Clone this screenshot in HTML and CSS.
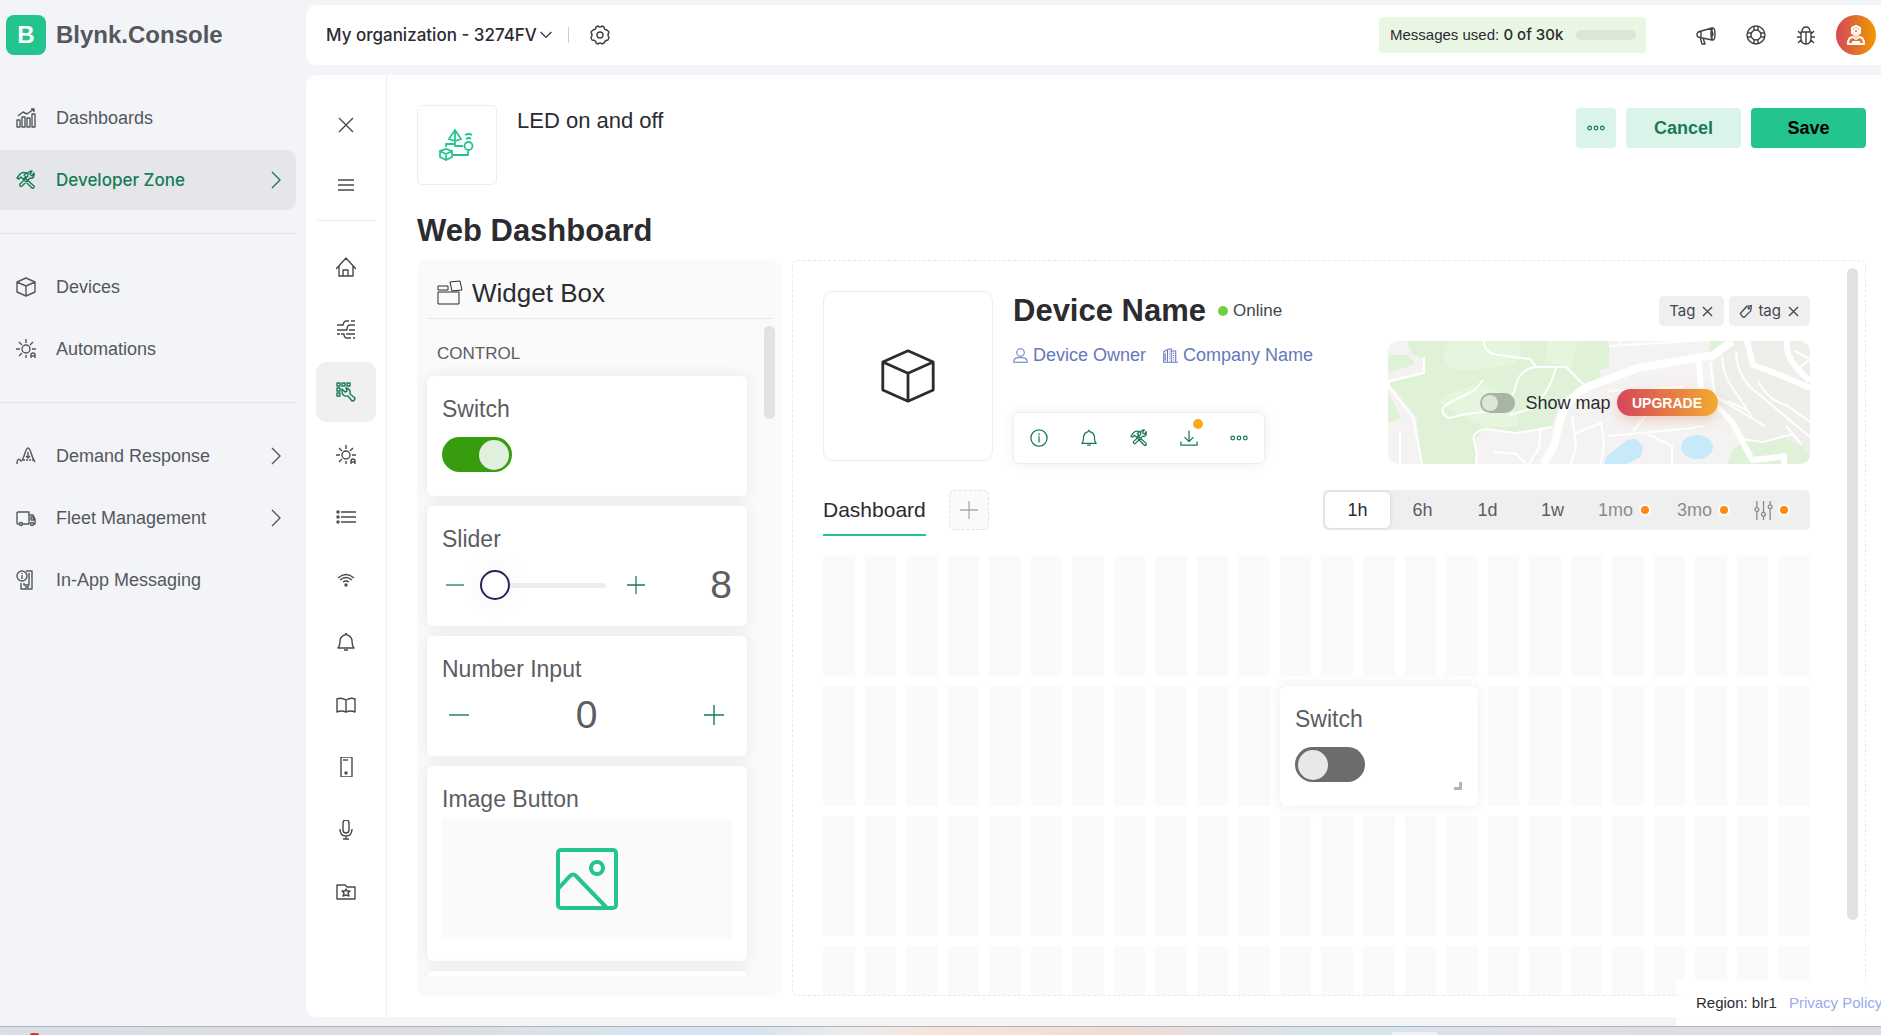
FILE: index.html
```html
<!DOCTYPE html>
<html lang="en">
<head>
<meta charset="utf-8">
<title>Blynk.Console</title>
<link rel="stylesheet" href="styles.css">
</head>
<body>
<svg class="sprite" aria-hidden="true">
  <symbol id="i-chart" viewBox="0 0 20 20"><path d="M1 12h3v7H1zM6 9h3v10H6zM11 10h3v9h-3zM16 6h3v13h-3zM2 8l5-4 4 2 7-5M15 1h3v3"/></symbol>
  <symbol id="i-tools" viewBox="0 0 20 20"><path d="M1 8l3-4c2-2 4-2 7-1L8 5l2 2-3 2-2-2-2 2zM9 8l9 8c1 1-1 3-2 2L8 10M18 3l-2 3-2-2 2-3c-3 0-5 2-4 5l-8 8c-1 2 1 3 2 2l8-8c3 1 5-2 4-5z"/></symbol>
  <symbol id="i-cube" viewBox="0 0 20 20"><path d="M10 1l9 4v10l-9 4-9-4V5zM1 5l9 4 9-4M10 9v10"/></symbol>
  <symbol id="i-auto" viewBox="0 0 20 20"><circle cx="10" cy="10" r="4"/><path d="M10 0v4M10 16v3M0 10h4M16 10h4M3 3l3 3M17 3l-3 3M3 17l3-3M15 19v-3q0-2 2-2t2 2v3M15 17h4"/></symbol>
  <symbol id="i-demand" viewBox="0 0 20 20"><path d="M1 18c0-5 2-6 4-3 3 0 4-13 7-13s3 9 7 14M12 6v6M10 10l2 2 2-2"/><path d="M7 14h10" stroke-dasharray="2 1"/></symbol>
  <symbol id="i-truck" viewBox="0 0 20 20"><path d="M3 16H2q-1 0-1-1V5q0-1 1-1h11v12H7M13 7h4l2 4v5h-1M15 9h2l1 3h-3z"/><circle cx="5" cy="16" r="1.500"/><circle cx="16" cy="16" r="1.500"/></symbol>
  <symbol id="i-inapp" viewBox="0 0 20 20"><circle cx="6" cy="6" r="5"/><path d="M6 5v4M6 3v1M10 1h6v18H5v-6M13 3v12H8v-2M9 17h4"/></symbol>
  <symbol id="i-right" viewBox="0 0 20 20"><path d="M6 2l8 8-8 8"/></symbol>
  <symbol id="i-down" viewBox="0 0 20 20"><path d="M1 5l9 9 9-9"/></symbol>
  <symbol id="i-gear" viewBox="0 0 20 20"><circle cx="10" cy="10" r="3"/><path d="M8 1q2 2 4 0l2 1q0 3 3 3l2 2q-2 3 0 6l-1 2q-3 0-4 3l-2 1q-2-2-4 0l-2-1q0-3-4-3l-1-2q2-3 0-6l2-2q3 0 3-3z"/></symbol>
  <symbol id="i-horn" viewBox="0 0 20 20"><path d="M2 7l14-4v12L2 12q-2-2 0-5M5 6v7M4 12l2 7h3l-2-6"/><ellipse cx="17" cy="9" rx="2" ry="6"/><path d="M16 7q2 2 0 4"/></symbol>
  <symbol id="i-ring" viewBox="0 0 20 20"><circle cx="10" cy="10" r="9"/><circle cx="10" cy="10" r="5"/><path d="M8 1v4M12 1v4M8 15v4M12 15v4M1 8h4M1 12h4M15 8h4M15 12h4"/></symbol>
  <symbol id="i-bug" viewBox="0 0 20 20"><path d="M5 7h10v6q0 6-5 6t-5-6zM6 7q0-5 4-5t4 5M10 7v12M5 9L2 6M15 9l3-3M5 12H1M15 12h4M5 15l-3 3M15 15l3 3"/></symbol>
  <symbol id="i-user" viewBox="0 0 20 20"><path d="M10 1l4 2v5l-4 3-4-3V3zM2 19q0-7 5-7l3 2 3-2q5 0 5 7zM6 17h8"/><circle cx="10" cy="6" r="2"/></symbol>
  <symbol id="i-close" viewBox="0 0 20 20"><path d="M3 3l14 14M17 3L3 17"/></symbol>
  <symbol id="i-menu" viewBox="0 0 20 20"><path d="M2 5h16M2 10h16M2 15h16"/></symbol>
  <symbol id="i-home" viewBox="0 0 20 20"><path d="M0 12L10 1l10 11M3 9v10h14V9M7 19v-6h5v6"/></symbol>
  <symbol id="i-flow" viewBox="0 0 20 20"><path d="M1 5h6q1-4 3-4h3M15 1h4M1 10h10q0-5 3-5h5M13 10h6M1 14h3M5 14h3q0 4 3 4h4M10 14h9M17 18h2"/></symbol>
  <symbol id="i-build" viewBox="0 0 20 20"><path d="M1 1h3v3H1zM6 1h3v3H6zM11 1h3v3h-3zM1 6h3v3H1zM1 11h3v3H1zM10 6q5 1 4 6l5 4q0 3-3 3l-4-5q-6 1-6-5V7l3 3 2-1z"/></symbol>
  <symbol id="i-list" viewBox="0 0 20 20"><path d="M5 5h15M5 10h15M5 15h15"/><circle cx="2" cy="5" r="1"/><circle cx="2" cy="10" r="1"/><circle cx="2" cy="15" r="1"/></symbol>
  <symbol id="i-wifi" viewBox="0 0 20 20"><path d="M2 8q8-7 16 0M4 10q6-5 12 0M7 12q3-2 6 0"/><circle cx="10" cy="15" r="1"/></symbol>
  <symbol id="i-bell" viewBox="0 0 20 20"><path d="M2 16q2-2 2-8 1-4 5-5 1-3 2 0 4 1 5 5 0 6 2 8zM8 18h4"/></symbol>
  <symbol id="i-book" viewBox="0 0 20 20"><path d="M10 5Q5 2 1 4v13q4-2 9 0 5-2 9 0V4q-4-2-9 1zM10 5v12"/></symbol>
  <symbol id="i-phone" viewBox="0 0 20 20"><rect x="5" y="0" width="11" height="20" rx="1"/><path d="M7 3h5"/><circle cx="10" cy="16" r="1"/></symbol>
  <symbol id="i-mic" viewBox="0 0 20 20"><rect x="7" y="0" width="6" height="13" rx="3"/><path d="M4 9q0 7 6 7t6-7M10 16v3M7 19h6"/></symbol>
  <symbol id="i-folder" viewBox="0 0 20 20"><path d="M1 3h8l2 2h8v12H1zM10 7l1 2h3l-2 2 1 3-3-1-3 1 1-3-2-2h3z"/></symbol>
  <symbol id="i-dots" viewBox="0 0 20 20"><circle cx="3" cy="10" r="2"/><circle cx="10" cy="10" r="2"/><circle cx="17" cy="10" r="2"/></symbol>
  <symbol id="i-minus" viewBox="0 0 20 20"><path d="M0 10h20"/></symbol>
  <symbol id="i-plus" viewBox="0 0 20 20"><path d="M0 10h20M10 0v20"/></symbol>
  <symbol id="i-person" viewBox="0 0 20 20"><circle cx="10" cy="6" r="5"/><path d="M1 19q0-6 6-6h6q6 0 6 6z"/></symbol>
  <symbol id="i-office" viewBox="0 0 20 20"><path d="M1 19V5l3-2h2v16M6 19V2l5-1v18M11 4h6v15M0 19h20M8 5h1M8 8h1M8 11h1M8 14h1M13 7h2M13 10h2M13 13h2M13 16h2M3 7v10"/></symbol>
  <symbol id="i-info" viewBox="0 0 20 20"><circle cx="10" cy="10" r="9"/><path d="M10 8v7M10 5v2"/></symbol>
  <symbol id="i-load" viewBox="0 0 20 20"><path d="M10 2v12M5 9l5 5 5-5M1 14v4h18v-4"/></symbol>
  <symbol id="i-tag" viewBox="0 0 20 20"><path d="M2 13L12 2l7-1-1 8L8 19q-3 0-6-6z"/><circle cx="15" cy="5" r="1"/></symbol>
  <symbol id="i-sliders" viewBox="0 0 20 20"><path d="M3 0v7M3 11v9M10 0v12M10 16v4M17 0v4M17 8v12"/><circle cx="3" cy="9" r="2"/><circle cx="10" cy="14" r="2"/><circle cx="17" cy="6" r="2"/></symbol>
</svg>

<div class="app">
  <aside class="sidebar">
    <a class="brand" href="#"><span class="brand-mark">B</span><span>Blynk.Console</span></a>
    <nav class="nav">
      <ul>
        <li><a href="#"><svg class="icon"><use href="#i-chart"/></svg>Dashboards</a></li>
        <li><a class="current" href="#"><svg class="icon"><use href="#i-tools"/></svg>Developer Zone<svg class="icon chev"><use href="#i-right"/></svg></a></li>
      </ul>
      <hr>
      <ul>
        <li><a href="#"><svg class="icon"><use href="#i-cube"/></svg>Devices</a></li>
        <li><a href="#"><svg class="icon"><use href="#i-auto"/></svg>Automations</a></li>
      </ul>
      <hr>
      <ul>
        <li><a href="#"><svg class="icon"><use href="#i-demand"/></svg>Demand Response<svg class="icon chev"><use href="#i-right"/></svg></a></li>
        <li><a href="#"><svg class="icon"><use href="#i-truck"/></svg>Fleet Management<svg class="icon chev"><use href="#i-right"/></svg></a></li>
        <li><a href="#"><svg class="icon"><use href="#i-inapp"/></svg>In-App Messaging</a></li>
      </ul>
    </nav>
  </aside>

  <div class="workspace">
    <header class="topbar">
      <button class="org" type="button">My organization - 3274FV<svg class="icon small"><use href="#i-down"/></svg></button>
      <span class="bar-sep"></span>
      <button class="bare" type="button" aria-label="Settings"><svg class="icon"><use href="#i-gear"/></svg></button>
      <div class="usage"><span>Messages used: <b>0 of 30k</b></span><span class="meter"></span></div>
      <div class="top-icons">
        <button class="bare" type="button" aria-label="News"><svg class="icon"><use href="#i-horn"/></svg></button>
        <button class="bare" type="button" aria-label="Help"><svg class="icon"><use href="#i-ring"/></svg></button>
        <button class="bare" type="button" aria-label="Report a bug"><svg class="icon"><use href="#i-bug"/></svg></button>
        <button class="avatar" type="button" aria-label="Profile"><svg class="icon"><use href="#i-user"/></svg></button>
      </div>
    </header>

    <div class="panel">
      <nav class="rail" aria-label="Template sections">
        <button type="button" aria-label="Close"><svg class="icon"><use href="#i-close"/></svg></button>
        <button type="button" aria-label="Menu"><svg class="icon"><use href="#i-menu"/></svg></button>
        <hr>
        <div class="rail-list">
          <button type="button" aria-label="Home"><svg class="icon"><use href="#i-home"/></svg></button>
          <button type="button" aria-label="Datastreams"><svg class="icon"><use href="#i-flow"/></svg></button>
          <button class="on" type="button" aria-label="Web Dashboard"><svg class="icon"><use href="#i-build"/></svg></button>
          <button type="button" aria-label="Automations"><svg class="icon"><use href="#i-auto"/></svg></button>
          <button type="button" aria-label="Metadata"><svg class="icon"><use href="#i-list"/></svg></button>
          <button type="button" aria-label="Connection"><svg class="icon"><use href="#i-wifi"/></svg></button>
          <button type="button" aria-label="Events"><svg class="icon"><use href="#i-bell"/></svg></button>
          <button type="button" aria-label="User Guides"><svg class="icon"><use href="#i-book"/></svg></button>
          <button type="button" aria-label="Mobile"><svg class="icon"><use href="#i-phone"/></svg></button>
          <button type="button" aria-label="Voice"><svg class="icon"><use href="#i-mic"/></svg></button>
          <button type="button" aria-label="Assets"><svg class="icon"><use href="#i-folder"/></svg></button>
        </div>
      </nav>

      <main class="content">
        <div class="title-row">
          <div class="thumb">
            <svg viewBox="0 0 36 34" width="36" height="34"><path d="M16 2l-6 9 6 2 6-2zM16 2v11M16 13v3M7 19v-3h9v2h8M14 27h15v-4M7 21l6 2v6l-6 3-6-3v-6zM1 23l6 3 6-3M7 26v6M27 11q3-2 5 0M26 7q4-2 7 0"/><circle cx="29.500" cy="18" r="4"/></svg>
          </div>
          <div class="name">LED on and off</div>
          <div class="actions">
            <button class="btn soft square" type="button" aria-label="More"><svg class="icon"><use href="#i-dots"/></svg></button>
            <button class="btn soft" type="button">Cancel</button>
            <button class="btn primary" type="button">Save</button>
          </div>
        </div>
        <h1>Web Dashboard</h1>
        <div class="editor">
          <section class="box">
            <h2><svg width="26" height="26" viewBox="0 0 26 26"><path d="M1 12h21v12H1zM1 6h10v4H1zM13 2l10-1 2 9-10 1z"/></svg>Widget Box</h2>
            <div class="box-scroll">
              <div class="widgets">
                <h3>CONTROL</h3>
                <div class="card">
                  <label for="sw1">Switch</label>
                  <input class="switch" id="sw1" type="checkbox" checked>
                </div>
                <div class="card">
                  <label for="range1">Slider</label>
                  <div class="slider">
                    <button type="button" aria-label="Decrease"><svg class="icon"><use href="#i-minus"/></svg></button>
                    <input id="range1" type="range" min="8" max="100" value="8">
                    <button type="button" aria-label="Increase"><svg class="icon"><use href="#i-plus"/></svg></button>
                    <output class="big">8</output>
                  </div>
                </div>
                <div class="card">
                  <label for="num1">Number Input</label>
                  <div class="stepper">
                    <button type="button" aria-label="Decrease"><svg class="icon"><use href="#i-minus"/></svg></button>
                    <input class="big" id="num1" type="text" value="0">
                    <button type="button" aria-label="Increase"><svg class="icon"><use href="#i-plus"/></svg></button>
                  </div>
                </div>
                <div class="card tall">
                  <div class="label">Image Button</div>
                  <button class="picture" type="button" aria-label="Image"><svg width="62" height="62" viewBox="0 0 62 62"><rect x="2" y="2" width="58" height="58" rx="3"/><circle cx="41" cy="20" r="6"/><path d="M2 41l12-13q3-3 6 0l30 31"/></svg></button>
                </div>
                <div class="card"></div>
              </div>
              <span class="thumb-bar"></span>
            </div>
          </section>

          <section class="preview">
            <div class="sheet">
              <div class="device">
                <div class="device-pic"><svg class="icon"><use href="#i-cube"/></svg></div>
                <div class="device-info">
                  <div class="device-name"><h2>Device Name</h2><span class="dot"></span><span>Online</span></div>
                  <div class="owner"><a href="#"><svg class="icon"><use href="#i-person"/></svg>Device Owner</a><a href="#"><svg class="icon"><use href="#i-office"/></svg>Company Name</a></div>
                  <div class="tools">
                    <button type="button" aria-label="Info"><svg class="icon"><use href="#i-info"/></svg></button>
                    <button type="button" aria-label="Notifications"><svg class="icon"><use href="#i-bell"/></svg></button>
                    <button type="button" aria-label="Developer tools"><svg class="icon"><use href="#i-tools"/></svg></button>
                    <button class="badged" type="button" aria-label="Download"><svg class="icon"><use href="#i-load"/></svg></button>
                    <button type="button" aria-label="More"><svg class="icon"><use href="#i-dots"/></svg></button>
                  </div>
                </div>
                <div class="device-side">
                  <div class="tags">
                    <span>Tag<svg class="icon"><use href="#i-close"/></svg></span>
                    <span><svg class="icon"><use href="#i-tag"/></svg>tag<svg class="icon"><use href="#i-close"/></svg></span>
                  </div>
                  <div class="map">
                    <svg class="map-art" viewBox="0 0 422 123" preserveAspectRatio="xMidYMid slice" aria-hidden="true">
                      <path fill="#f4f3f2" d="M0 0h422v123H0z"/>
                      <path fill="#efeeeb" d="M326 14l18-14h78v123l-60-20-35-34z"/>
                      <path fill="#dff2d7" d="M19 0h202v27l-9 2v12l-15 5-24 13-9 27-36 6-31-4-11 11 3 13-1 11H34l-6-47L1 42l35-10V17l-12-3zM0 14h20l8 9L0 32zM0 50l13 28-13 4zM322 0h18l-3 9-16 3zM355 100l40-3 19 8 8 10v8h-82l4-13z"/>
                      <path fill="#e5f5de" d="M60 0h70q10 20-10 24T72 30q-25-8-12-30zM160 0h30l-8 28-25-8zM50 60q40-25 60-10t20 35l-30 2q-30-12-50-27z"/>
                      <path fill="#c7e9f9" d="M216 123l3-8 20-16 9-1 7 7-2 11-14 7z"/>
                      <ellipse fill="#c7e9f9" cx="309" cy="106" rx="16" ry="12"/>
                      <g fill="none" stroke="#fff" stroke-linejoin="round">
                        <path stroke-width="8" d="M155 123l11-18 7-29q5-18 26-30l51-19 76-13 18-14"/>
                        <path stroke-width="6" d="M359 0l6 24 27 10 30 13M399 0q-3 18 23 40M311 19l2 30 32 33 19 37 20-2 12-2v8"/>
                        <path stroke-width="2" d="M36 16v16L1 40v6l24 30 9 47M96 0q0 12 14 14 24 3 32 4l6 8q-16 2-20 18-5 20-17 26-30 1-50 7-12-6-2-14l28-14 8-10M148 26l30 0 20 20M168 26q-7 28-26 42l-20 6M164 86l-36 6-30-4q-15 3-12 12l3 12-1 11M106 111l22 2 10 10M153 87l-2 20-10 16M184 75l4 30-5 18M188 92l25-10 3 20-3 21M221 95l84-8q8-4 10 0M221 50l74-4M257 92l27 13v18M245 90l15-18M221 5l100-6M232 0v5M322 20l5 35 50 30M334 16q2 20 10 30l20 30M348 10q0 20 14 36l60 50M340 60l20 10M370 40q10 20 30 25l22 16M355 98l20 3 30-8 8 10-15-18M407 10l15 8M408 30l14-12M12 90l0 33"/>
                      </g>
                    </svg>
                    <div class="map-bar"><input class="switch mini" id="showmap" type="checkbox"><label for="showmap">Show map</label><button class="upgrade" type="button">UPGRADE</button></div>
                  </div>
                </div>
              </div>

              <div class="tabs">
                <a class="tab" href="#">Dashboard</a>
                <button class="add" type="button" aria-label="Add tab"><svg class="icon"><use href="#i-plus"/></svg></button>
                <div class="periods">
                  <button class="on" type="button">1h</button>
                  <button type="button">6h</button>
                  <button type="button">1d</button>
                  <button type="button">1w</button>
                  <button class="paid" type="button">1mo<i></i></button>
                  <button class="paid" type="button">3mo<i></i></button>
                  <button class="paid" type="button" aria-label="Custom"><svg class="icon"><use href="#i-sliders"/></svg><i></i></button>
                </div>
              </div>

              <div class="board">
                <div class="columns"><i></i><i></i><i></i><i></i><i></i><i></i><i></i><i></i><i></i><i></i><i></i><i></i><i></i><i></i><i></i><i></i><i></i><i></i><i></i><i></i><i></i><i></i><i></i><i></i></div>
                <div class="card placed">
                  <label for="sw2">Switch</label>
                  <input class="switch" id="sw2" type="checkbox">
                  <span class="grip"></span>
                </div>
              </div>
            </div>
            <span class="thumb-bar"></span>
          </section>
        </div>
      </main>
    </div>
  </div>
  <footer class="legal"><span>Region: blr1</span><a href="#">Privacy Policy</a></footer>
</div>
<div class="taskbar"><span class="task-alert"></span><span class="task-active"></span></div>
</body>
</html>
```
FILE: styles.css
```css
* { box-sizing: border-box; }
html, body { height: 100%; }
body {
  margin: 0;
  display: flex;
  flex-direction: column;
  overflow: hidden;
  background: #f2f4f8;
  color: #2b2b30;
  font: 18px/24px "Liberation Sans", Arial, sans-serif;
}
ul { list-style: none; margin: 0; padding: 0; }
h1, h2, h3 { margin: 0; }
a { color: inherit; text-decoration: none; }
button { font: inherit; color: inherit; border: 0; padding: 0; background: none; display: flex; align-items: center; justify-content: center; flex: none; }
hr { border: 0; height: 1px; background: #e2e4e8; margin: 0; width: 100%; }
svg { fill: none; stroke: currentColor; stroke-width: 1; flex: none; }
.sprite { position: absolute; width: 0; height: 0; }
.icon { width: 20px; height: 20px; overflow: visible; stroke-linejoin: round; stroke-width: 7%; }

.app { flex: 1; min-height: 0; display: flex; position: relative; }

/* Sidebar */
.sidebar { width: 306px; flex: none; color: #55575d; }
.brand { display: flex; align-items: center; gap: 10px; margin: 15px 0 33px 6px; height: 40px; font-size: 24px; font-weight: bold; }
.brand-mark { width: 40px; height: 40px; border-radius: 8px; background: #24c48e; color: #fff; line-height: 40px; text-align: center; }
.nav { width: 296px; }
.nav ul { display: grid; gap: 2px; }
.nav a { display: flex; align-items: center; gap: 20px; height: 60px; padding: 0 10px 0 16px; border-radius: 0 10px 10px 0; }
.nav a.current { background: #e4e6ea; color: #187a56; font: 500 17px/24px Inter, "Liberation Sans", sans-serif; }
.nav hr { margin: 23px 0; }
.chev { margin-left: auto; }

/* Header */
.workspace { flex: 1; min-width: 0; display: flex; flex-direction: column; padding: 5px 0 9px; gap: 10px; }
.topbar { height: 60px; flex: none; background: #fff; border-radius: 10px 0 0 10px; display: flex; align-items: center; padding: 0 5px 0 20px; }
.org { font: 500 17px/24px Inter, "Liberation Sans", sans-serif; gap: 3px; }
.small { width: 12px; height: 12px; stroke-width: 10%; }
.bar-sep { width: 1px; height: 16px; background: #c9ccd2; margin: 0 21px 0 16px; }
.bare { width: 20px; height: 20px; color: #3f4147; }
.usage { margin-left: auto; width: 267px; height: 36px; border-radius: 4px; background: #e9f6e3; display: flex; align-items: center; justify-content: space-between; padding: 0 10px 0 11px; font-size: 15px; white-space: nowrap; }
.usage b { font: 500 15px/20px Inter, "Liberation Sans", sans-serif; }
.meter { width: 60px; height: 10px; border-radius: 5px; background: #dbe6d6; }
.top-icons { display: flex; align-items: center; gap: 30px; margin-left: 50px; }
.avatar { width: 40px; height: 40px; border-radius: 50%; background: linear-gradient(90deg, #d4465a, #f09a00); color: #fff; margin-left: -10px; }
.avatar .icon { stroke-width: 2; }

/* Panel and rail */
.panel { flex: 1; min-height: 0; background: #fff; border-radius: 10px 0 0 10px; display: flex; }
.rail { width: 81px; flex: none; border-right: 1px solid #eeeeef; padding: 20px 10px 95px; display: flex; flex-direction: column; align-items: center; color: #47484e; }
.rail button { width: 60px; height: 60px; border-radius: 10px; }
.rail hr { margin: 5px 0 16px; background: #eeeeef; }
.rail-list { flex: 1; display: flex; flex-direction: column; justify-content: space-between; }
.rail .on { background: #f0f0f0; color: #187a56; }

/* Content */
.content { flex: 1; min-width: 0; padding: 30px 15px 21px 30px; display: flex; flex-direction: column; }
.title-row { display: flex; gap: 20px; height: 80px; flex: none; }
.thumb { width: 80px; height: 80px; border: 1px solid #eee; border-radius: 5px; display: flex; align-items: center; justify-content: center; color: #24c48e; }
.thumb svg { stroke-width: 5%; }
.name { font-size: 22px; line-height: 32px; }
.actions { margin: 3px 0 0 auto; display: flex; gap: 10px; }
.btn { width: 115px; height: 40px; border-radius: 4px; font-weight: bold; }
.soft { background: #daf4ea; color: #187a56; }
.primary { background: #24c48e; color: #000; }
.square { width: 40px; }
.square .icon { width: 18px; height: 18px; }
h1 { font-size: 31px; line-height: 40px; margin: 26px 0 9px; }
.editor { flex: 1; min-height: 0; display: flex; gap: 10px; }

/* Widget box */
.box { width: 365px; flex: none; background: #fafafa; border-radius: 10px; padding: 0 10px 20px; display: flex; flex-direction: column; }
.box h2 { display: flex; align-items: center; gap: 9px; height: 59px; padding: 8px 0 0 10px; flex: none; border-bottom: 1px solid #e8e8e8; font-size: 26px; font-weight: normal; }
.box-scroll { flex: 1; min-height: 0; overflow: hidden; display: flex; justify-content: space-between; margin: 0 -3px 0 -10px; padding-left: 10px; }
.widgets { width: 320px; display: flex; flex-direction: column; gap: 10px; }
.widgets h3 { font-size: 17px; font-weight: normal; line-height: 24px; color: #5c5d62; padding: 23px 10px 0; }
.card { flex: none; min-height: 120px; border-radius: 6px; background: #fff; box-shadow: 0 0 15px rgba(0, 0, 0, .08); padding: 17px 15px 0; display: flex; flex-direction: column; color: #5c5d62; font-size: 23px; line-height: 32px; }
.card.tall { min-height: 195px; }
.thumb-bar { width: 11px; border-radius: 6px; background: #e2e2e2; }
.box .thumb-bar { height: 93px; margin-top: 7px; }
.switch { appearance: none; margin: 12px 0 0; width: 70px; height: 35px; border-radius: 18px; background: #6c6c6c; display: flex; align-items: center; padding: 0 3px; }
.switch::before { content: ""; width: 30px; height: 30px; border-radius: 50%; background: #e8e8e8; }
.switch:checked { background: #379d0f; justify-content: flex-end; }
.switch:checked::before { background: #e1f0dc; }
.big { font-size: 39px; line-height: 40px; color: #5c5d62; }
.slider, .stepper { display: flex; align-items: center; height: 50px; margin-top: 5px; color: #187a56; }
.slider button { width: 26px; }
.slider .icon { width: 18px; height: 18px; }
.slider input { appearance: none; background: none; width: 126px; height: 30px; margin: 0 17px 0 12px; }
.slider input::-webkit-slider-runnable-track { height: 5px; border-radius: 3px; background: #eee; }
.slider input::-webkit-slider-thumb { appearance: none; width: 30px; height: 30px; margin-top: -13px; border-radius: 50%; background: #fff; border: 2px solid #23265c; box-shadow: 0 0 30px rgba(0, 0, 0, .06); }
.slider output { margin-left: auto; }
.stepper { padding: 0 8px 0 7px; }
.stepper input { flex: 1; min-width: 0; border: 0; padding: 0; background: none; text-align: center; font-family: inherit; }
.picture { height: 120px; background: #fafafa; color: #24c48e; margin-top: 4px; width: 100%; }
.picture svg { stroke-width: 4; }

/* Device preview */
.preview { flex: 1; min-width: 0; border: 1px dashed #e9e9e9; border-radius: 6px; display: flex; overflow: hidden; padding-right: 7px; }
.sheet { flex: 1; min-width: 0; padding: 30px 37px 0 30px; }
.preview .thumb-bar { height: 652px; margin-top: 7px; }
.device { display: flex; gap: 20px; }
.device-pic { width: 170px; height: 170px; flex: none; border: 1px solid #eee; border-radius: 10px; display: flex; align-items: center; justify-content: center; }
.device-pic .icon { width: 56px; height: 58px; stroke-width: 1; }
.device-name { display: flex; align-items: center; height: 40px; font-size: 17px; color: #45464b; }
.device-name h2 { font-size: 31px; line-height: 40px; color: #2b2b30; }
.dot { width: 10px; height: 10px; border-radius: 50%; background: #70d13c; margin: 0 5px 0 12px; }
.owner { display: flex; gap: 17px; color: #6478b8; margin: 12px 0 45px; white-space: nowrap; }
.owner a { display: flex; align-items: center; gap: 5px; }
.owner .icon { width: 15px; height: 15px; }
.tools { display: flex; width: 252px; height: 52px; border: 1px solid #eee; border-radius: 6px; box-shadow: 0 0 12px rgba(0, 0, 0, .07); color: #187a56; }
.tools button { width: 50px; height: 50px; position: relative; }
.tools .icon { width: 18px; height: 18px; }
.badged::after { content: ""; position: absolute; top: 6px; right: 11px; width: 10px; height: 10px; border-radius: 50%; background: #fbab18; }
.device-side { flex: 1; max-width: 422px; min-width: 0; margin-left: auto; padding-top: 5px; }
.tags { display: flex; justify-content: flex-end; gap: 5px; margin-bottom: 15px; }
.tags span { display: flex; align-items: center; gap: 6px; height: 30px; padding: 0 10px; background: #efefef; border-radius: 5px; font: 15px/20px Inter, "Liberation Sans", sans-serif; color: #45464b; }
.tags .icon { width: 13px; height: 13px; stroke-width: 10%; }
.map { height: 123px; border-radius: 10px; overflow: hidden; display: grid; }
.map-art { grid-area: 1 / 1; width: 100%; height: 100%; stroke: none; }
.map-bar { grid-area: 1 / 1; z-index: 1; align-self: center; display: flex; align-items: center; justify-content: center; }
.map-bar label { margin: 0 6px 0 10px; }
.switch.mini { width: 35px; height: 20px; margin: 0; padding: 0 2px; background: #a9b5a4; }
.switch.mini::before { width: 16px; height: 16px; background: #dde6d9; }
.upgrade { width: 101px; height: 27px; border-radius: 14px; background: linear-gradient(90deg, #d6455c, #f1ac30); box-shadow: 0 4px 12px rgba(220, 120, 80, .3); color: #fff; font-size: 14px; font-weight: bold; }

/* Tabs and time range */
.tabs { display: flex; height: 46px; margin: 26px 0 20px; }
.tab { font-size: 21px; line-height: 40px; border-bottom: 2px solid #24c48e; }
.add { width: 40px; height: 40px; margin-left: 23px; border: 1px dashed #e2e2e2; border-radius: 5px; background: #fafafa; color: #aaa; }
.add .icon { width: 18px; height: 18px; }
.periods { margin-left: auto; width: 487px; height: 40px; display: flex; padding: 2px; background: #efefef; border-radius: 5px; color: #5c5d62; }
.periods button { width: 65px; height: 36px; border-radius: 5px; gap: 6px; }
.periods .on { background: #fff; color: #2b2b30; box-shadow: 0 0 4px rgba(0, 0, 0, .15); }
.periods .paid { width: 79px; color: #8b8c90; }
.periods .paid:last-child { width: 58px; gap: 5px; }
.periods .icon { width: 19px; height: 19px; }
.periods i { width: 12px; height: 12px; border: 2px solid #fff; border-radius: 50%; background: #fd8b14; }

/* Widget grid */
.board { display: grid; grid-template-columns: repeat(24, minmax(0, 1fr)); grid-template-rows: repeat(4, 120px); gap: 10px; }
.columns { grid-area: 1 / 1 / -1 / -1; display: grid; grid-template-columns: repeat(24, minmax(0, 1fr)); gap: 10px; }
.columns i { background: repeating-linear-gradient(#fafafa 0 120px, #fff 120px 130px); }
.placed { grid-area: 2 / 12 / 3 / 17; position: relative; }
.grip { position: absolute; right: 16px; bottom: 16px; width: 8px; height: 8px; border: solid #b4b4b4; border-width: 0 3px 3px 0; }

/* Region note over the page corner */
.legal { position: absolute; right: 0; bottom: 0; width: 205px; height: 46px; padding-left: 20px; display: flex; align-items: center; gap: 12px; overflow: hidden; white-space: nowrap; background: rgba(255, 255, 255, .9); font-size: 15px; }
.legal a { color: #98abef; }

.taskbar { flex: none; height: 9px; border-top: 1px solid #b2b4bb; background: linear-gradient(90deg, #dadfe9 0, #dedde0 21%, #d6e4ef 34%, #d6e4ef 40%, #ececec 45%, #f6e4da 50%, #efdcd6 60%, #d6e4ee 70%, #d6e4ee 74%, #dedfe8 80%, #dfdce4 100%); display: flex; align-items: flex-end; overflow: hidden; }
.task-alert { width: 9px; height: 2px; margin-left: 30px; border-radius: 4px 4px 0 0; background: #d93a2b; }
.task-active { width: 47px; height: 3px; margin-left: 1352px; border-radius: 3px 3px 0 0; background: #eef1f5; }
```
